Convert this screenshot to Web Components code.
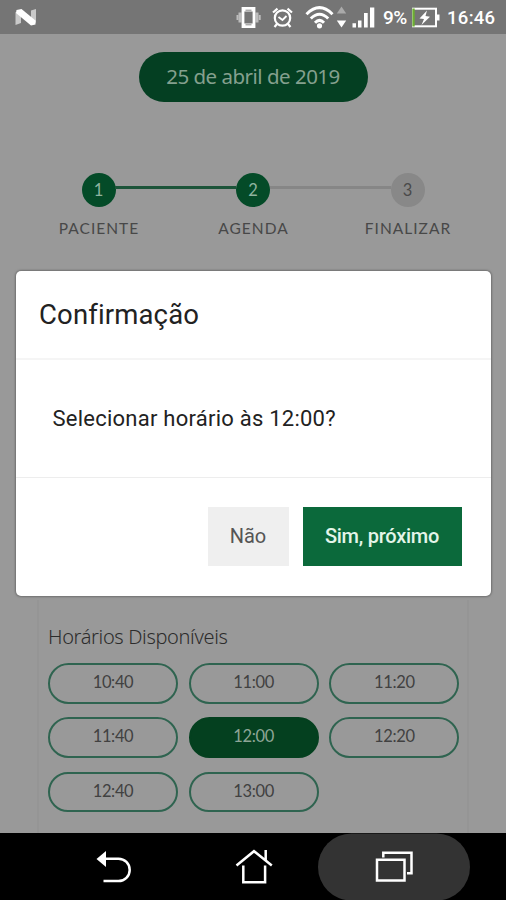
<!DOCTYPE html>
<html lang="pt-BR">
<head>
<meta charset="utf-8">
<title>Agenda</title>
<style>
html,body{margin:0;height:900px;overflow:hidden;background:#999}
</style>
</head>
<body>
<booking-app></booking-app>
<script>
const define = (name, html) => {
  const t = document.createElement('template');
  t.innerHTML = html;
  customElements.define(name, class extends HTMLElement {
    constructor() {
      super();
      this.attachShadow({ mode: 'open' }).append(t.content.cloneNode(true));
    }
  });
};

define('status-bar', `
<style>
:host{display:flex;height:34px;background:#757575;color:#fff}
svg{display:block;flex:none}
.clock,.pct{font:500 18.5px/36px Roboto,sans-serif;white-space:nowrap}
.pct{width:29px;font-size:19px;letter-spacing:-.5px}
.clock{margin-left:6px;letter-spacing:.3px}
</style>
<svg width="383" height="34" viewBox="0 0 383 34" fill="#fff">
  <path d="M15.500 12 21 14 21 23 15.500 25zM31 10.500 36 9 36 22.500 31 24z" fill="#c9c9c9"/>
  <path d="M16.500 10 21.500 9 35.500 20.500 35.500 24.500 31 25.500 16 13z"/>
  <g fill="#bdbdbd"><rect x="238.500" y="12.500" width="3" height="10"/><rect x="236.500" y="15" width="2" height="5"/><rect x="255.500" y="12.500" width="3" height="10"/><rect x="258.700" y="15" width="2" height="5"/></g>
  <path d="M243 8.500h11v18h-11z" fill="none" stroke="#fff" stroke-width="2.800"/><path d="M243 9h11v2.500h-11zM243 23.500h11v3h-11z"/><path d="M245.500 10.200h6M245.500 24.800h6" stroke="#888" stroke-width="1"/>
  <g fill="none" stroke="#fff" stroke-width="2.200"><circle cx="282.500" cy="18" r="7.700"/><path d="M273 12.500l4.500-3.800M292 12.500l-4.500-3.800M277 24l-2.500 3M288 24l2.500 3"/><path d="M278.500 17l4 3 4-4" stroke-width="1.800"/></g>
  <g fill="none" stroke="#fff" stroke-width="3"><path d="M306.500 14.200q13-13 26 0"/><path d="M310.800 18.500q8.700-8.500 17.400 0"/><path d="M315 22.700q4.500-4.500 9 0"/></g><circle cx="319.500" cy="25.800" r="2.600"/>
  <path d="M336.800 13.500 341.500 6.500 346.200 13.500z" fill="#aaa"/><path d="M336.800 20.500 341.500 27.500 346.200 20.500z"/>
  <path d="M352.500 23.300h3.500v4.200h-3.500zM358 20.500h3.500v7H358zM370 7.500h4.300v20H370zM364 13h3.700v14.500H364z"/>
</svg>
<span class="pct">9%</span>
<svg width="29" height="34" viewBox="412 0 29 34"><rect x="413" y="8.700" width="23" height="17.600" fill="none" stroke="#fff" stroke-width="2"/><path d="M413.500 8.500v18" stroke="#6cae32" stroke-width="2.400"/><path d="M437 14.500h2.500v6H437z" fill="#fff"/><path d="M427 10.500 419.500 18.500 424 19 421.500 25 430 16.800 425.500 16z" fill="#fff"/></svg>
<span class="clock">16:46</span>
`);

define('date-pill', `
<style>
:host{display:flex;justify-content:center;align-items:center;box-sizing:border-box;width:229px;height:50.500px;border-radius:26px;background:#043f22;color:#84a08e;font:400 20.500px/1 "Noto Sans",sans-serif;padding-bottom:1px;letter-spacing:-.5px;white-space:nowrap}
</style><slot></slot>`);

define('step-item', `
<style>
:host{display:flex;flex-direction:column;align-items:center;width:110px;gap:12.500px;font-family:Lato,sans-serif;color:#484848}
.dot{width:34px;height:34px;border-radius:50%;background:#888;color:#4a4a4a;display:flex;align-items:center;justify-content:center;font-size:16.500px}
:host([done]) .dot{background:#044b28;color:#8fb39f}
.label{font-size:15.500px;line-height:19px;letter-spacing:1px;margin-right:-1px;white-space:nowrap}
</style>
<div class="dot"><slot name="n"></slot></div><div class="label"><slot></slot></div>`);

define('step-list', `
<style>
:host{display:flex;justify-content:center;align-items:flex-start;height:70px}
.line{height:3.500px;width:121px;margin:13px -38.250px 0;background:#868686;flex:none}
.line.on{background:#1c5439}
step-item{flex:none}
</style>
<step-item done><span slot="n">1</span>PACIENTE</step-item><div class="line on"></div>
<step-item done><span slot="n">2</span>AGENDA</step-item><div class="line"></div>
<step-item><span slot="n">3</span>FINALIZAR</step-item>`);

define('time-slot', `
<style>
:host{display:flex;align-items:center;justify-content:center;box-sizing:border-box;height:40.500px;border:2px solid #2f6450;border-radius:21px;color:#414141;font:400 16.500px/1 Lato,sans-serif;letter-spacing:-.35px;padding-bottom:2px}
:host([selected]){background:#04401f;border-color:#04401f;color:#8ea596}
</style><slot></slot>`);

define('slot-panel', `
<style>
:host{display:block;box-sizing:border-box;width:432px;height:233px;border:solid #959595;border-width:0 2px;padding:23px 8.500px 0 9px}
h2{margin:0 0 12px;font:300 20px/28px "Noto Sans",sans-serif;color:#2c2c2c;letter-spacing:-.35px;white-space:nowrap}
.grid{display:grid;grid-template-columns:repeat(3,130px);column-gap:10.700px;row-gap:13.800px}
</style>
<h2>Horários Disponíveis</h2>
<div class="grid">
<time-slot>10:40</time-slot><time-slot>11:00</time-slot><time-slot>11:20</time-slot>
<time-slot>11:40</time-slot><time-slot selected>12:00</time-slot><time-slot>12:20</time-slot>
<time-slot>12:40</time-slot><time-slot>13:00</time-slot>
</div>`);

define('confirm-dialog', `
<style>
:host{display:flex;flex-direction:column;box-sizing:border-box;width:475px;height:325px;background:#fff;border-radius:5px;box-shadow:0 0 2px 1px #707070;font-family:Roboto,sans-serif;color:#222}
header{height:89px;box-sizing:border-box;padding:0 23px;line-height:87px;font-size:27.500px;letter-spacing:.15px;border-bottom:2px solid #f5f5f5}
main{height:118px;box-sizing:border-box;padding:0 36.500px;line-height:118px;font-size:22px;letter-spacing:.24px;border-bottom:1px solid #ededed;white-space:nowrap}
footer{display:flex;justify-content:flex-end;gap:14px;padding:29px 29.500px 0}
button{all:unset;box-sizing:border-box;height:59px;text-align:center;font-size:20px;line-height:59px;background:#efefef;color:#555;width:81px;white-space:nowrap}
.ok{width:159px;background:#0b693b;color:#e4f5e9;font-weight:500;letter-spacing:-.25px}
</style>
<header><slot name="title"></slot></header>
<main><slot></slot></main>
<footer><button>Não</button><button class="ok">Sim, próximo</button></footer>`);

define('nav-bar', `
<style>
:host{display:flex;justify-content:space-evenly;height:67px;background:#000}
svg{display:block}
</style>
<svg width="506" height="67" viewBox="0 833 506 67" fill="none" stroke="#fff" stroke-width="2.500">
  <rect x="318" y="833.500" width="152" height="67" rx="33.500" fill="#333" stroke="none"/>
  <path d="M104 858.700h14.500a11 11 0 0 1 0 22.400H103.500"/><path d="M96.500 859 106 851v16z" fill="#fff" stroke="none"/>
  <path d="M236.500 865.500 254 851.200l17.800 14.300M265.700 850v10M243.300 865.500v16.800h21.800v-16.800"/>
  <path d="M377 859.800h27.500v20.800H377zM383.300 857.500v-4.700h28.200v20.500h-4.500"/>
</svg>`);

define('booking-app', `
<style>
:host{display:flex;flex-direction:column;position:relative;width:506px;height:900px;overflow:hidden;background:#999}
.page{height:799.500px;display:flex;flex-direction:column;align-items:center;overflow:hidden}
date-pill{margin-top:17.500px;flex:none}
step-list{margin-top:70.500px;flex:none}
slot-panel{margin-top:357.500px;flex:none}
status-bar,nav-bar{flex:none}
confirm-dialog{position:absolute;left:16px;top:271px}
</style>
<status-bar></status-bar>
<div class="page"><date-pill>25 de abril de 2019</date-pill><step-list></step-list><slot-panel></slot-panel></div>
<nav-bar></nav-bar>
<confirm-dialog><span slot="title">Confirmação</span>Selecionar horário às 12:00?</confirm-dialog>`);
</script>
</body>
</html>
